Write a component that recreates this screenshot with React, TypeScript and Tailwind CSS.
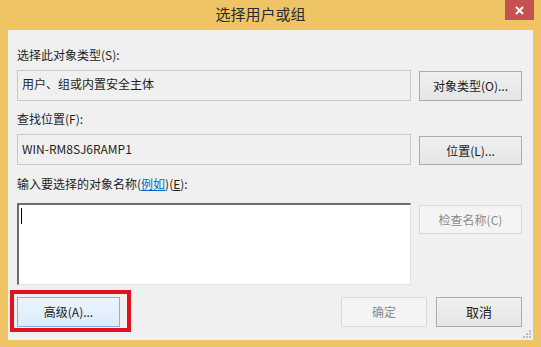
import React from "react";

const font = { fontFamily: '"Noto Sans CJK SC", "Noto Sans", sans-serif' };

function Btn({ children, className = "", disabled = false }: { children: React.ReactNode; className?: string; disabled?: boolean }) {
  return (
    <div
      className={
        "flex items-center justify-center text-[12px] border " +
        (disabled
          ? "border-[#d9d9d9] bg-[#f4f4f4] text-[#8a8a8a] "
          : "border-[#acacac] bg-gradient-to-b from-[#f0f0f0] to-[#e5e5e5] text-[#1a1a1a] ") +
        className
      }
    >
      {children}
    </div>
  );
}

export default function App() {
  return (
    <div className="w-[541px] h-[347px] bg-[#efc465] flex flex-col overflow-hidden" style={font}>
      <div className="relative h-[30px] flex items-center justify-center">
        <span className="text-[15px] text-[#2b2b2b] mr-[20px] -mt-[2px]">选择用户或组</span>
        <div className="absolute left-[505px] top-0 w-[29px] h-[20px] bg-[#c75050] flex items-center justify-center">
          <svg width="9" height="9" viewBox="0 0 9 9">
            <path d="M1 1 L8 8 M8 1 L1 8" stroke="#ffffff" strokeWidth="2" />
          </svg>
        </div>
      </div>
      <div className="relative mx-[8px] h-[310px] bg-[#f0f0f0] pl-[9px] pr-[11px] pt-[17px] flex flex-col text-[12px] text-[#1e1e1e]">
        <div className="h-[16px] leading-[16px]">选择此对象类型(S):</div>
        <div className="flex mt-[7px] gap-[8px]">
          <div className="w-[394px] h-[31px] border border-[#c9c9c9] bg-[#f0f0f0] pl-[4px] pt-[5px] leading-[16px]">用户、组或内置安全主体</div>
          <Btn className="w-[103px] h-[30px] mt-[1px]">对象类型(O)...</Btn>
        </div>
        <div className="h-[16px] leading-[16px] mt-[10px]">查找位置(F):</div>
        <div className="flex mt-[7px] gap-[8px]">
          <div className="w-[394px] h-[31px] border border-[#c9c9c9] bg-[#f0f0f0] pl-[4px] pt-[6px] leading-[16px]">WIN-RM8SJ6RAMP1</div>
          <Btn className="w-[103px] h-[29px] mt-[2px]">位置(L)...</Btn>
        </div>
        <div className="h-[16px] leading-[16px] mt-[11px]">
          输入要选择的对象名称(<span className="text-[#0066cc] underline">例如</span>)(<span className="underline">E</span>):
        </div>
        <div className="flex mt-[11px] gap-[8px]">
          <div className="w-[394px] h-[82px] bg-white border-t-2 border-l-2 border-[#6d6d6d] border-r border-b border-r-[#e3e3e3] border-b-[#e3e3e3] pl-[2px] pt-[3px]">
            <div className="w-[1px] h-[16px] bg-black" />
          </div>
          <Btn disabled className="w-[103px] h-[29px] mt-[2px]">检查名称(C)</Btn>
        </div>
        <div className="flex mt-[12px] items-start">
          <div className="relative">
            <div className="absolute left-[-7px] top-[-7px] right-[-11px] bottom-[-5px] border-[4px] border-[#e0121f]" />
            <div className="w-[103px] h-[30px] border border-[#7eb4ea] bg-gradient-to-b from-[#ecf4fc] to-[#dcecfc] flex items-center justify-center text-[12px] text-[#1a1a1a]">
              高级(A)...
            </div>
          </div>
          <div className="flex-1" />
          <Btn disabled className="w-[86px] h-[30px]">确定</Btn>
          <Btn className="w-[86px] h-[30px] ml-[9px] text-[13px]">取消</Btn>
        </div>
        <svg className="absolute right-[2px] bottom-[2px]" width="8" height="8" viewBox="0 0 8 8">
          <rect x="6" y="0" width="2" height="2" fill="#bdbdbd" />
          <rect x="3" y="3" width="2" height="2" fill="#bdbdbd" />
          <rect x="6" y="3" width="2" height="2" fill="#bdbdbd" />
          <rect x="0" y="6" width="2" height="2" fill="#bdbdbd" />
          <rect x="3" y="6" width="2" height="2" fill="#bdbdbd" />
          <rect x="6" y="6" width="2" height="2" fill="#bdbdbd" />
        </svg>
      </div>
    </div>
  );
}
